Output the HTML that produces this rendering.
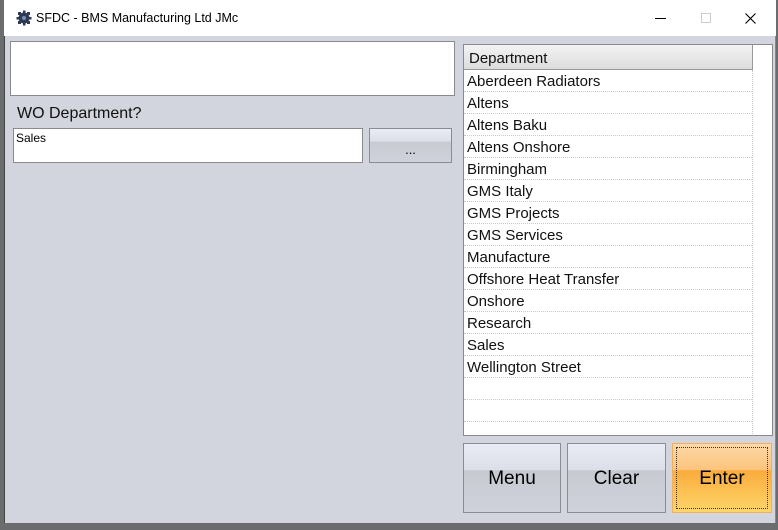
<!DOCTYPE html>
<html><head><style>
*{margin:0;padding:0;box-sizing:border-box}
body{width:778px;height:530px;overflow:hidden;background:#6a6c6e;font-family:"Liberation Sans",sans-serif;position:relative}
.win{position:absolute;left:4px;top:0;width:772px;height:523px;background:#d2d5dd;border-left:1px solid #444;border-right:1px solid #888}
.title{position:absolute;left:-1px;top:0;width:772px;height:36px;background:#fff;font-size:12.5px;color:#000}
.abs{position:absolute}
.box{position:absolute;background:#fff;border:1px solid #8a8a8a}
.btn{position:absolute;border:1px solid #8a8c90;background:linear-gradient(#e9ebf5 0,#dcdee8 38%,#c8cad2 39%,#cfd2da 100%);display:flex;align-items:center;justify-content:center;font-size:19px;color:#000;padding-top:2px}
.row{position:absolute;left:0;width:288px;height:22px;border-bottom:1px dotted #c8c8c8;font-size:15px;line-height:24px;padding-left:3px;color:#111}
</style></head><body>
<div class="win">
<div class="title">
<svg class="abs" style="left:12px;top:10px" width="16" height="16" viewBox="0 0 16 16"><circle cx="8" cy="8" r="5.5" fill="#2c3a55"/><g fill="#2c3a55"><rect x="7" y="0.5" width="2.5" height="4"/><rect x="7" y="11.5" width="2.5" height="4"/><rect x="0.5" y="7" width="4" height="2.5"/><rect x="11.5" y="7" width="4" height="2.5"/><rect x="2" y="2" width="3" height="3"/><rect x="11" y="11" width="3" height="3"/><rect x="11" y="2" width="3" height="3"/><rect x="2" y="11" width="3" height="3"/></g><circle cx="8" cy="8" r="2" fill="#7d8eb0"/></svg>
<div class="abs" style="left:32px;top:11px">SFDC - BMS Manufacturing Ltd JMc</div>
<div class="abs" style="left:651px;top:18px;width:11px;height:1px;background:#000"></div>
<div class="abs" style="left:697px;top:13px;width:10px;height:10px;border:1px solid #ccc"></div>
<svg class="abs" style="left:741px;top:13px" width="11" height="11"><path d="M0.5 0.5L10.5 10.5M10.5 0.5L0.5 10.5" stroke="#000" stroke-width="1.1"/></svg>
</div>
<div class="box" style="left:5px;top:41px;width:445px;height:55px"></div>
<div class="abs" style="left:12px;top:105px;font-size:16px;color:#111">WO Department?</div>
<div class="box" style="left:8px;top:128px;width:350px;height:35px;font-size:12px;padding:2px 2px">Sales</div>
<div class="btn" style="left:364px;top:128px;width:83px;height:35px;font-size:13px;padding-top:8px">...</div>
<div class="box" style="left:458px;top:44px;width:310px;height:392px;overflow:hidden">
<div class="abs" style="left:0;top:0;width:289px;height:25px;background:linear-gradient(#f3f3f3,#dcdcdc);border-bottom:1px solid #999;border-right:1px solid #999;font-size:15px;line-height:27px;padding-left:5px;color:#111">Department</div>
<div class="abs" style="left:288px;top:25px;height:370px;border-left:1px dotted #c8c8c8"></div>
<div class="row" style="top:25px">Aberdeen Radiators</div>
<div class="row" style="top:47px">Altens</div>
<div class="row" style="top:69px">Altens Baku</div>
<div class="row" style="top:91px">Altens Onshore</div>
<div class="row" style="top:113px">Birmingham</div>
<div class="row" style="top:135px">GMS Italy</div>
<div class="row" style="top:157px">GMS Projects</div>
<div class="row" style="top:179px">GMS Services</div>
<div class="row" style="top:201px">Manufacture</div>
<div class="row" style="top:223px">Offshore Heat Transfer</div>
<div class="row" style="top:245px">Onshore</div>
<div class="row" style="top:267px">Research</div>
<div class="row" style="top:289px">Sales</div>
<div class="row" style="top:311px">Wellington Street</div>
<div class="row" style="top:333px"></div>
<div class="row" style="top:355px"></div>
</div>
<div class="btn" style="left:458px;top:443px;width:98px;height:70px">Menu</div>
<div class="btn" style="left:562px;top:443px;width:99px;height:70px">Clear</div>
<div class="btn" style="left:667px;top:443px;width:100px;height:70px;border-color:#f0b060;background:linear-gradient(#fdd8a8 0,#fcc47c 38%,#fbab3c 39%,#fdd66a 100%)"><div class="abs" style="left:3px;top:3px;right:3px;bottom:3px;border:1px dotted #333"></div>Enter</div>
</div>
</body></html>
